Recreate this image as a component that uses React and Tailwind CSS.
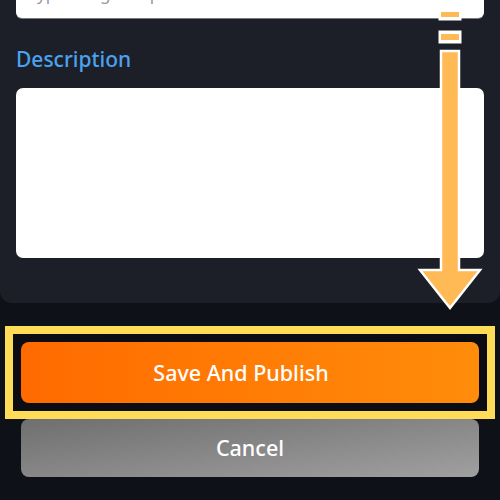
export default function App() {
  return (
    <div className="relative h-[500px] w-[500px] overflow-hidden bg-[#0e1117] font-['Noto_Sans',sans-serif]">
      <div className="flex h-[303px] flex-col rounded-b-[12px] bg-[#1c1f27] px-4">
        <div className="-mt-[30px] flex h-[48px] shrink-0 items-center rounded-[6px] bg-white px-3 text-[17px] text-[#9a9a9a] shadow-[0_1px_0_#7a7a7a]">
          Type a tag and press enter to add it
        </div>
        <div className="mt-[27px] text-[21px] font-medium leading-[28px] text-[#4ba3ef]">Description</div>
        <div className="mt-[15px] h-[170px] shrink-0 rounded-[7px] bg-white"></div>
      </div>

      <div className="mx-[5px] mt-[23px] border-[8px] border-[#ffdc58] bg-[#0b0d12] px-2 py-2">
        <button className="flex h-[61px] w-full items-center justify-center rounded-[8px] bg-gradient-to-r from-[#ff6a00] to-[#ff8c0a] pr-[18px] pt-[2px] text-[21.5px] font-medium text-white">
          Save And Publish
        </button>
      </div>
      <div className="px-[21px]">
        <button className="flex h-[58px] w-full items-center justify-center rounded-[8px] bg-gradient-to-br from-[#6f6f6f] to-[#a0a0a0] text-[21.5px] font-medium text-white">
          Cancel
        </button>
      </div>

      <svg className="absolute left-0 top-0" width="500" height="500" viewBox="0 0 500 500">
        <rect x="438.5" y="8.5" width="23" height="12" fill="#ffffff" />
        <rect x="441" y="12" width="18" height="5" fill="#ffb955" />
        <rect x="438.5" y="30.5" width="23" height="13" fill="#ffffff" />
        <rect x="441" y="34" width="18" height="6" fill="#ffb955" />
        <path
          d="M441 51 H459 V270 H480 L450 308 L420 270 H441 Z"
          fill="#ffb955"
          stroke="#ffffff"
          strokeWidth="2.5"
          strokeLinejoin="miter"
        />
      </svg>
    </div>
  );
}
